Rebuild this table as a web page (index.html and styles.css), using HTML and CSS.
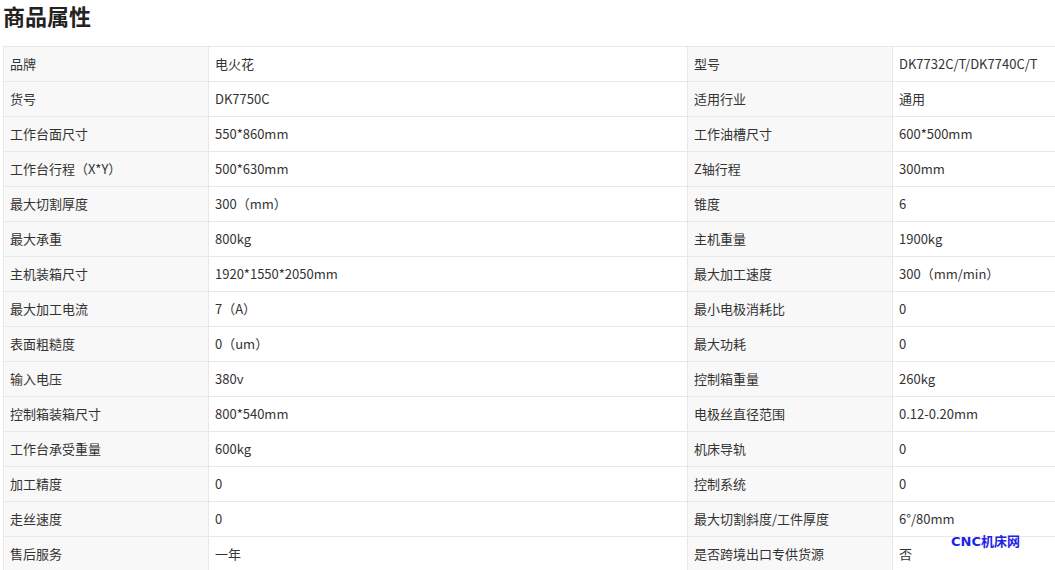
FILE: index.html
```html
<!DOCTYPE html>
<html lang="zh">
<head>
<meta charset="utf-8">
<link rel="stylesheet" href="styles.css">
</head>
<body>
<div class="page">
  <h2 class="title">商品属性</h2>
  <table class="attrs">
    <colgroup><col class="c1"><col class="c2"><col class="c3"><col class="c4"></colgroup>
    <tbody>
      <tr><td class="k">品牌</td><td>电火花</td><td class="k">型号</td><td>DK7732C/T/DK7740C/T</td></tr>
      <tr><td class="k">货号</td><td>DK7750C</td><td class="k">适用行业</td><td>通用</td></tr>
      <tr><td class="k">工作台面尺寸</td><td>550*860mm</td><td class="k">工作油槽尺寸</td><td>600*500mm</td></tr>
      <tr><td class="k">工作台行程（X*Y）</td><td>500*630mm</td><td class="k">Z轴行程</td><td>300mm</td></tr>
      <tr><td class="k">最大切割厚度</td><td>300（mm）</td><td class="k">锥度</td><td>6</td></tr>
      <tr><td class="k">最大承重</td><td>800kg</td><td class="k">主机重量</td><td>1900kg</td></tr>
      <tr><td class="k">主机装箱尺寸</td><td>1920*1550*2050mm</td><td class="k">最大加工速度</td><td>300（mm/min）</td></tr>
      <tr><td class="k">最大加工电流</td><td>7（A）</td><td class="k">最小电极消耗比</td><td>0</td></tr>
      <tr><td class="k">表面粗糙度</td><td>0（um）</td><td class="k">最大功耗</td><td>0</td></tr>
      <tr><td class="k">输入电压</td><td>380v</td><td class="k">控制箱重量</td><td>260kg</td></tr>
      <tr><td class="k">控制箱装箱尺寸</td><td>800*540mm</td><td class="k">电极丝直径范围</td><td>0.12-0.20mm</td></tr>
      <tr><td class="k">工作台承受重量</td><td>600kg</td><td class="k">机床导轨</td><td>0</td></tr>
      <tr><td class="k">加工精度</td><td>0</td><td class="k">控制系统</td><td>0</td></tr>
      <tr><td class="k">走丝速度</td><td>0</td><td class="k">最大切割斜度/工件厚度</td><td>6°/80mm</td></tr>
      <tr><td class="k">售后服务</td><td>一年</td><td class="k">是否跨境出口专供货源</td><td>否</td></tr>
    </tbody>
  </table>
  <div class="watermark">CNC机床网</div>
</div>
</body>
</html>
```

FILE: styles.css
```css
html, body {
  margin: 0;
  padding: 0;
  background: #ffffff;
}
body {
  font-family: "Noto Sans CJK SC", "Noto Sans", sans-serif;
  color: #333333;
}
.page {
  position: relative;
  padding: 0 0 0 3px;
  width: 1052px;
}
.title {
  margin: 0;
  height: 46px;
  font-size: 22px;
  line-height: 30px;
  font-weight: 700;
  color: #222222;
}
.attrs {
  border-collapse: collapse;
  table-layout: fixed;
  width: 1052px;
  font-size: 13px;
}
.c1 { width: 205px; }
.c2 { width: 479px; }
.c3 { width: 205px; }
.c4 { width: 163px; }
.attrs td {
  border: 1px solid #e8e8e8;
  height: 33px;
  padding: 0 0 1px 6px;
  line-height: 18px;
  white-space: nowrap;
  overflow: hidden;
  vertical-align: middle;
}
.attrs td.k {
  background: #f8f8f8;
}
.watermark {
  position: absolute;
  left: 951px;
  top: 531px;
  font-size: 13px;
  font-weight: 700;
  color: #1c22e8;
  font-family: "DejaVu Sans", "Noto Sans CJK SC", sans-serif;
}
```
